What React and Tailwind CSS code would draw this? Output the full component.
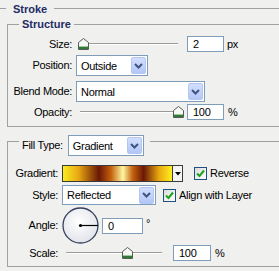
import React from "react";

function Chevron() {
  return (
    <svg width="9" height="6" viewBox="0 0 9 6">
      <polyline points="1,1 4.5,4.5 8,1" fill="none" stroke="#3f5480" strokeWidth="2" />
    </svg>
  );
}

function Select({ className, text }) {
  return (
    <div className={`${className} h-[21px] border border-[#7f9db9] bg-white flex items-center`}>
      <span className="flex-1 pl-[4px] leading-[14px]">{text}</span>
      <div className="w-[15px] h-[17px] mr-[1px] rounded-[2px] border border-[#b4c7f3] bg-gradient-to-b from-[#d2defd] to-[#b3c7f6] flex items-center justify-center">
        <Chevron />
      </div>
    </div>
  );
}

function NumInput({ className, value }) {
  return (
    <div className={`${className} h-[16px] border border-[#7f9db9] bg-white flex items-center pl-[5px] leading-[14px]`}>
      {value}
    </div>
  );
}

function Thumb() {
  return (
    <svg width="11" height="12" viewBox="0 0 11 12">
      <polygon points="0.5,4.5 5.5,0.5 10.5,4.5 10.5,11.5 0.5,11.5" fill="#f6f9f3" stroke="#5a5a5a" strokeWidth="1" />
      <rect x="1" y="9" width="9" height="2" fill="#2f7a34" />
      <rect x="1" y="8" width="9" height="1" fill="#9cc89c" />
    </svg>
  );
}

function Slider({ className, thumbLeft, trackLeft, trackRight }) {
  return (
    <div className={`${className} relative h-[16px]`}>
      <div className="absolute top-[7px] h-px bg-[#9a9a9a]" style={{ left: trackLeft, right: trackRight }} />
      <div className="absolute top-[8px] h-px bg-white" style={{ left: trackLeft, right: trackRight }} />
      <div className="absolute top-[2px]" style={{ left: thumbLeft }}>
        <Thumb />
      </div>
    </div>
  );
}

function Checkbox() {
  return (
    <div className="w-[13px] h-[13px] border border-[#1c5180] bg-gradient-to-br from-[#dcdcd7] to-white flex items-center justify-center">
      <svg width="11" height="11" viewBox="0 0 11 11">
        <polyline points="2,5.5 4.5,8 9,2.5" fill="none" stroke="#21a121" strokeWidth="2" />
      </svg>
    </div>
  );
}

function AngleDial() {
  return (
    <svg width="37" height="37" viewBox="0 0 37 37">
      <defs>
        <radialGradient id="dialg" cx="0.45" cy="0.4" r="0.6">
          <stop offset="0" stopColor="#ffffff" />
          <stop offset="1" stopColor="#e2e4ea" />
        </radialGradient>
      </defs>
      <circle cx="18.5" cy="18.5" r="17.5" fill="url(#dialg)" stroke="#34405e" strokeWidth="1.3" />
      <line x1="18.5" y1="18.5" x2="36" y2="18.5" stroke="#000" strokeWidth="1.2" />
      <circle cx="18.5" cy="18.5" r="1.6" fill="#000" />
    </svg>
  );
}

export default function App() {
  return (
    <div className="w-[279px] h-[271px] overflow-hidden bg-[#f0f0ee] text-[11px] tracking-[-0.3px] text-black font-['Liberation_Sans',Arial,sans-serif]">
      {/* Stroke header */}
      <div className="flex items-center h-[17px]">
        <div className="w-[6px] h-px bg-[#a0a0a0]" />
        <span className="ml-[7px] font-bold tracking-normal text-[#1e2d66] leading-[14px]">Stroke</span>
        <div className="ml-[7px] flex-1 h-px bg-[#a0a0a0]" />
      </div>

      {/* Structure group */}
      <div className="ml-[7px] mt-[7px] w-[290px] border-l border-t border-b border-[#a0a0a0] pb-[6px]">
        <div className="-mt-[8px] ml-[11px] w-fit px-[3px] bg-[#f0f0ee] font-bold tracking-normal text-[#1e2d66] leading-[14px]">
          Structure
        </div>

        <div className="mt-[5px] flex items-center h-[16px]">
          <span className="w-[64px] text-right">Size:</span>
          <Slider className="w-[107px] ml-[5px]" thumbLeft={1} trackLeft={3} trackRight={6} />
          <NumInput className="w-[37px] ml-[3px]" value="2" />
          <span className="ml-[3px]">px</span>
        </div>

        <div className="mt-[3px] flex items-center h-[21px]">
          <span className="w-[64px] text-right">Position:</span>
          <Select className="w-[72px] ml-[4px]" text="Outside" />
        </div>

        <div className="mt-[5px] flex items-center h-[21px]">
          <span className="w-[64px] text-right">Blend Mode:</span>
          <Select className="w-[129px] ml-[4px]" text="Normal" />
        </div>

        <div className="mt-[2px] flex items-center h-[16px]">
          <span className="w-[64px] text-right">Opacity:</span>
          <Slider className="w-[107px] ml-[5px]" thumbLeft={96} trackLeft={3} trackRight={6} />
          <NumInput className="w-[37px] ml-[3px]" value="100" />
          <span className="ml-[4px]">%</span>
        </div>
      </div>

      {/* Fill group */}
      <div className="ml-[7px] mt-[14px] w-[290px] border-l border-t border-b border-[#a0a0a0] pb-[5px]">
        <div className="-mt-[7px] ml-[11px] w-fit pl-[3px] pr-[6px] bg-[#f0f0ee] flex items-center h-[21px]">
          <span>Fill Type:</span>
          <Select className="w-[76px] ml-[5px]" text="Gradient" />
        </div>

        <div className="mt-[9px] flex items-center h-[17px]">
          <span className="w-[50px] text-right">Gradient:</span>
          <div className="ml-[4px] w-[121px] h-[17px] border border-[#3a3a3a] flex">
            <div className="flex-1 bg-[linear-gradient(to_right,#f8ec20_0%,#e9a812_14%,#6a1804_33%,#c4600e_44%,#fff6a0_55%,#c4600e_64%,#6a1804_74%,#e8a810_88%,#fff020_100%)]" />
            <div className="w-[10px] bg-[#f4f4f4] border-l border-[#3a3a3a] flex items-center justify-center">
              <svg width="6" height="4" viewBox="0 0 6 4">
                <polygon points="0,0 6,0 3,3.5" fill="#000" />
              </svg>
            </div>
          </div>
          <div className="ml-[11px]">
            <Checkbox />
          </div>
          <span className="ml-[3px]">Reverse</span>
        </div>

        <div className="mt-[3px] flex items-center h-[20px]">
          <span className="w-[50px] text-right">Style:</span>
          <Select className="w-[94px] ml-[4px] !h-[20px]" text="Reflected" />
          <div className="ml-[7px]">
            <Checkbox />
          </div>
          <span className="ml-[3px]">Align with Layer</span>
        </div>

        <div className="mt-[2px] flex items-center h-[37px]">
          <span className="w-[50px] text-right">Angle:</span>
          <div className="ml-[4px] h-[37px]">
            <AngleDial />
          </div>
          <NumInput className="w-[41px] ml-[3px]" value="0" />
          <span className="ml-[3px] self-start mt-[11px] leading-[10px]">°</span>
        </div>

        <div className="mt-[1px] flex items-center h-[16px]">
          <span className="w-[50px] text-right">Scale:</span>
          <Slider className="w-[108px] ml-[4px]" thumbLeft={60} trackLeft={4} trackRight={8} />
          <NumInput className="w-[38px] ml-[3px]" value="100" />
          <span className="ml-[4px]">%</span>
        </div>
      </div>
    </div>
  );
}
